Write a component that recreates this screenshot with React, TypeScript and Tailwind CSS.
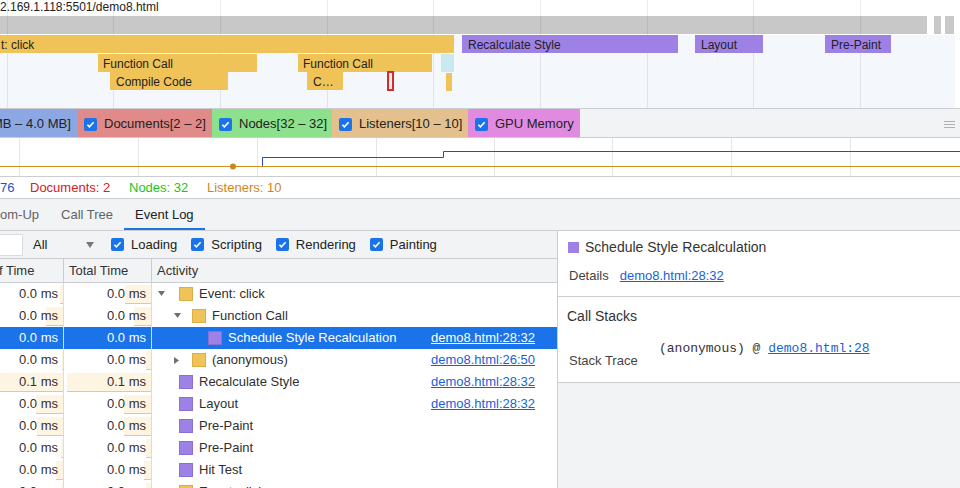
import React from "react";

const yellow = "bg-[#efc357]";
const purple = "bg-[#9e81e5]";

const flame = [
  { x: 0, w: 454, y: 35, label: "t: click", c: yellow, p: 1 },
  { x: 462, w: 216, y: 35, label: "Recalculate Style", c: purple, p: 6 },
  { x: 695, w: 68, y: 35, label: "Layout", c: purple, p: 6 },
  { x: 825, w: 66, y: 35, label: "Pre-Paint", c: purple, p: 6 },
  { x: 98, w: 159, y: 54, label: "Function Call", c: yellow, p: 5 },
  { x: 298, w: 134, y: 54, label: "Function Call", c: yellow, p: 5 },
  { x: 441, w: 13, y: 54, label: "", c: "bg-[#c9e8ef]", p: 0 },
  { x: 110, w: 118, y: 72, label: "Compile Code", c: yellow, p: 6 },
  { x: 307, w: 36, y: 72, label: "C…", c: yellow, p: 6 },
  { x: 446, w: 6, y: 73, label: "", c: yellow, p: 0 },
];

const flameGrid = [7, 113, 220, 327, 433, 540, 647, 753, 860];
const chartGrid = [19, 138, 257, 376, 494, 612, 731, 850];

type Row = {
  self: string;
  total: string;
  selfBar?: number;
  totalBar?: number;
  name: string;
  indent: number;
  arrow?: "down" | "right";
  kind: "y" | "p";
  link?: string;
  selected?: boolean;
};

const rows: Row[] = [
  { self: "0.0 ms", total: "0.0 ms", selfBar: 60, totalBar: 125, name: "Event: click", indent: 0, arrow: "down", kind: "y" },
  { self: "0.0 ms", total: "0.0 ms", selfBar: 46, totalBar: 134, name: "Function Call", indent: 1, arrow: "down", kind: "y" },
  { self: "0.0 ms", total: "0.0 ms", name: "Schedule Style Recalculation", indent: 2, kind: "p", link: "demo8.html:28:32", selected: true },
  { self: "0.0 ms", total: "0.0 ms", selfBar: 62, totalBar: 146, name: "(anonymous)", indent: 1, arrow: "right", kind: "y", link: "demo8.html:26:50" },
  { self: "0.1 ms", total: "0.1 ms", selfBar: 0, totalBar: 67, name: "Recalculate Style", indent: 0, kind: "p", link: "demo8.html:28:32" },
  { self: "0.0 ms", total: "0.0 ms", selfBar: 36, totalBar: 124, name: "Layout", indent: 0, kind: "p", link: "demo8.html:28:32" },
  { self: "0.0 ms", total: "0.0 ms", selfBar: 37, totalBar: 124, name: "Pre-Paint", indent: 0, kind: "p" },
  { self: "0.0 ms", total: "0.0 ms", selfBar: 61, totalBar: 146, name: "Pre-Paint", indent: 0, kind: "p" },
  { self: "0.0 ms", total: "0.0 ms", selfBar: 56, totalBar: 144, name: "Hit Test", indent: 0, kind: "p" },
  { self: "0.0 ms", total: "0.0 ms", selfBar: 61, totalBar: 146, name: "Event: click", indent: 0, kind: "y" },
];

function Check() {
  return (
    <span className="flex h-[13px] w-[13px] shrink-0 items-center justify-center rounded-[2px] bg-[#1a73e8]">
      <svg viewBox="0 0 12 12" className="h-[11px] w-[11px]">
        <path d="M2.6 6.3l2.2 2.2 4.6-5" fill="none" stroke="white" strokeWidth="1.8" />
      </svg>
    </span>
  );
}

function Legend({ color, label }: { color: string; label: string }) {
  return (
    <div className={`flex items-center gap-[7px] overflow-hidden whitespace-nowrap pt-[2px] pl-[7px] ${color}`}>
      <Check />
      <span>{label}</span>
    </div>
  );
}

function Arrow({ dir }: { dir: "down" | "right" }) {
  return dir === "down" ? (
    <svg width="9" height="7" viewBox="0 0 9 7">
      <path d="M1 1h7L4.5 6z" fill="#6f6f6f" />
    </svg>
  ) : (
    <svg width="7" height="9" viewBox="0 0 7 9">
      <path d="M1 1v7l5-3.5z" fill="#6f6f6f" />
    </svg>
  );
}

function TableRow({ r }: { r: Row }) {
  const sq = r.kind === "y" ? "bg-[#efc357] border-[#dcae44]" : "bg-[#9e81e5] border-[#8b6ed6]";
  const arrowLeft = r.indent === 0 ? 5 : 21;
  const squareLeft = r.indent === 0 ? 27 : r.indent === 1 ? 40 : 56;
  return (
    <div className={`flex h-[22px] ${r.selected ? "bg-[#1a73e8] text-white" : "text-[#303030]"}`}>
      <div className="relative flex w-[64px] items-center justify-end border-r border-[#dadce0] pr-[5px]">
        {!r.selected && r.selfBar !== undefined && (
          <div
            className="absolute top-[2px] right-0 bottom-[1px] border-b border-[#f0c872] bg-[#fdf4e1]"
            style={{ left: r.selfBar }}
          />
        )}
        <span className="relative">{r.self}</span>
      </div>
      <div className="relative flex w-[88px] items-center justify-end border-r border-[#dadce0] pr-[5px]">
        {!r.selected && r.totalBar !== undefined && (
          <div
            className="absolute top-[2px] right-0 bottom-[1px] border-b border-[#f0c872] bg-[#fdf4e1]"
            style={{ left: r.totalBar - 64 }}
          />
        )}
        <span className="relative">{r.total}</span>
      </div>
      <div className="flex flex-1 items-center">
        <div className="relative flex h-full w-[279px] items-center">
          {r.arrow && (
            <span className="absolute top-[7px]" style={{ left: arrowLeft }}>
              <Arrow dir={r.arrow} />
            </span>
          )}
          <span
            className={`h-[14px] w-[14px] shrink-0 border ${sq}`}
            style={{ marginLeft: squareLeft }}
          />
          <span className="ml-[6px] whitespace-nowrap">{r.name}</span>
        </div>
        {r.link && (
          <span className={`underline ${r.selected ? "text-white" : "text-[#1a5fd8]"}`}>{r.link}</span>
        )}
      </div>
    </div>
  );
}

export default function App() {
  return (
    <div className="h-[488px] w-[960px] overflow-hidden bg-white font-['Liberation_Sans',Arial,sans-serif] text-[13px] text-[#303030]">
      {/* flame chart */}
      <div className="relative h-[109px] overflow-hidden border-b border-[#cbcdd1]">
        <div className="h-[16px] pl-0 text-[12px] leading-[14px] text-[#222]">2.169.1.118:5501/demo8.html</div>
        <div className="flex h-[18px]">
          <div className="w-[927px] bg-[#c8c8c8]" />
          <div className="ml-[7px] w-[7px] bg-[#c8c8c8]" />
          <div className="ml-[4px] w-[9px] bg-[#c8c8c8]" />
        </div>
        <div className="mr-[5px] h-[74px] border-t border-white bg-[#f4f7fc]" />
        {flameGrid.map((x) => (
          <div key={x} className="absolute top-0 bottom-0 w-px bg-black/[0.08]" style={{ left: x }} />
        ))}
        {flame.map((b, i) => (
          <div
            key={i}
            className={`absolute h-[18px] overflow-hidden whitespace-nowrap text-[12px] leading-[20px] text-[#222] ${b.c}`}
            style={{ left: b.x, top: b.y, width: b.w, paddingLeft: b.p }}
          >
            {b.label}
          </div>
        ))}
        <div className="absolute top-[71px] left-[387px] h-[20px] w-[7px] border-2 border-[#d42b2b] bg-[#ececec]" />
      </div>

      {/* legend */}
      <div className="flex h-[29px] items-stretch border-b border-[#cbcdd1] bg-[#f1f3f4] text-[#222]">
        <div className="flex w-[77px] items-center overflow-hidden bg-[#8ca7e2] pt-[2px]">
          <span className="ml-[-8px] whitespace-nowrap">MB – 4.0 MB]</span>
        </div>
        <div className="flex w-[135px]"><Legend color="w-full bg-[#e08a8a]" label="Documents[2 – 2]" /></div>
        <div className="flex w-[120px]"><Legend color="w-full bg-[#8de18d]" label="Nodes[32 – 32]" /></div>
        <div className="flex w-[136px]"><Legend color="w-full bg-[#e3c08d]" label="Listeners[10 – 10]" /></div>
        <div className="flex w-[112px]"><Legend color="w-full bg-[#e08be0]" label="GPU Memory" /></div>
        <div className="flex-1" />
        <div className="mr-[5px] flex flex-col justify-center gap-[2px] pt-[2px]">
          <span className="block h-px w-[11px] bg-[#b0b0b0]" />
          <span className="block h-px w-[11px] bg-[#b0b0b0]" />
          <span className="block h-px w-[11px] bg-[#b0b0b0]" />
        </div>
      </div>

      {/* counter chart */}
      <div className="h-[39px] border-b border-[#cbcdd1]">
        <svg width="960" height="38" className="block">
          {chartGrid.map((x) => (
            <line key={x} x1={x + 0.5} x2={x + 0.5} y1="0" y2="38" stroke="#e6e6e6" />
          ))}
          <path d="M0 28.5H960" stroke="#d38f1c" fill="none" />
          <path d="M262.5 28V19.5H443.5V13.5H960" stroke="#1d50c6" fill="none" />
          <circle cx="233" cy="28.5" r="3" fill="#c6891a" />
        </svg>
      </div>

      {/* counters */}
      <div className="flex h-[22px] items-center border-b border-[#cbcdd1]">
        <span className="w-[30px] text-[#1a56c9]">76</span>
        <span className="w-[99px] text-[#d42020]">Documents: 2</span>
        <span className="w-[78px] text-[#22c322]">Nodes: 32</span>
        <span className="text-[#d0861a]">Listeners: 10</span>
      </div>

      {/* tabs */}
      <div className="flex h-[32px] items-stretch border-b border-[#cbcdd1] bg-[#f1f3f4] text-[#5f6368]">
        <div className="flex items-center pr-[11px]">om-Up</div>
        <div className="flex items-center px-[11px]">Call Tree</div>
        <div className="flex items-center border-b-2 border-[#1a73e8] px-[11px] pt-[2px] text-[#202124]">Event Log</div>
      </div>

      <div className="flex">
        {/* left panel */}
        <div className="w-[558px] border-r border-[#cbcdd1]">
          <div className="flex h-[28px] items-center border-b border-[#cbcdd1] bg-[#f1f3f4] text-[#222]">
            <div className="h-[22px] w-[23px] border border-l-0 border-[#dadce0] bg-white" />
            <span className="ml-[10px] w-[53px]">All</span>
            <svg width="8" height="6" viewBox="0 0 8 6">
              <path d="M0 0h8L4 6z" fill="#777" />
            </svg>
            <div className="ml-[17px] flex items-center gap-[14px]">
              <div className="flex items-center gap-[7px]"><Check /><span>Loading</span></div>
              <div className="flex items-center gap-[7px]"><Check /><span>Scripting</span></div>
              <div className="flex items-center gap-[7px]"><Check /><span>Rendering</span></div>
              <div className="flex items-center gap-[7px]"><Check /><span>Painting</span></div>
            </div>
          </div>
          <div className="flex h-[24px] border-b border-[#cbcdd1] bg-[#f1f3f4] text-[#333]">
            <div className="flex w-[64px] items-center overflow-hidden border-r border-[#cbcdd1]">
              <span className="ml-[-1px] whitespace-nowrap">f Time</span>
            </div>
            <div className="flex w-[88px] items-center border-r border-[#cbcdd1] pl-[5px]">Total Time</div>
            <div className="flex items-center pl-[5px]">Activity</div>
          </div>
          {rows.map((r, i) => (
            <TableRow key={i} r={r} />
          ))}
        </div>

        {/* right panel */}
        <div className="flex-1">
          <div className="h-[66px] border-b border-[#cbcdd1] bg-white pl-[10px]">
            <div className="flex h-[32px] items-center gap-[6px] text-[14px] text-[#333]">
              <span className="h-[11px] w-[11px] bg-[#9e81e5]" />
              <span>Schedule Style Recalculation</span>
            </div>
            <div className="flex h-[26px] items-center gap-[11px] pl-[1px]">
              <span className="text-[#444]">Details</span>
              <span className="text-[#1a5fd8] underline">demo8.html:28:32</span>
            </div>
          </div>
          <div className="h-[86px] border-b border-[#cbcdd1] bg-white pl-[9px]">
            <div className="flex h-[37px] items-center pt-[1px] text-[14px] text-[#333]">Call Stacks</div>
            <div className="flex items-start">
              <span className="mt-[19px] w-[92px] pl-[2px] leading-[16px] text-[#444]">Stack Trace</span>
              <span className="mt-[7px] font-['Liberation_Mono',monospace] leading-[16px] text-[#333]">
                (anonymous) @ <span className="text-[#1a5fd8] underline">demo8.html:28</span>
              </span>
            </div>
          </div>
          <div className="h-[200px] bg-[#f1f3f4]" />
        </div>
      </div>
    </div>
  );
}
